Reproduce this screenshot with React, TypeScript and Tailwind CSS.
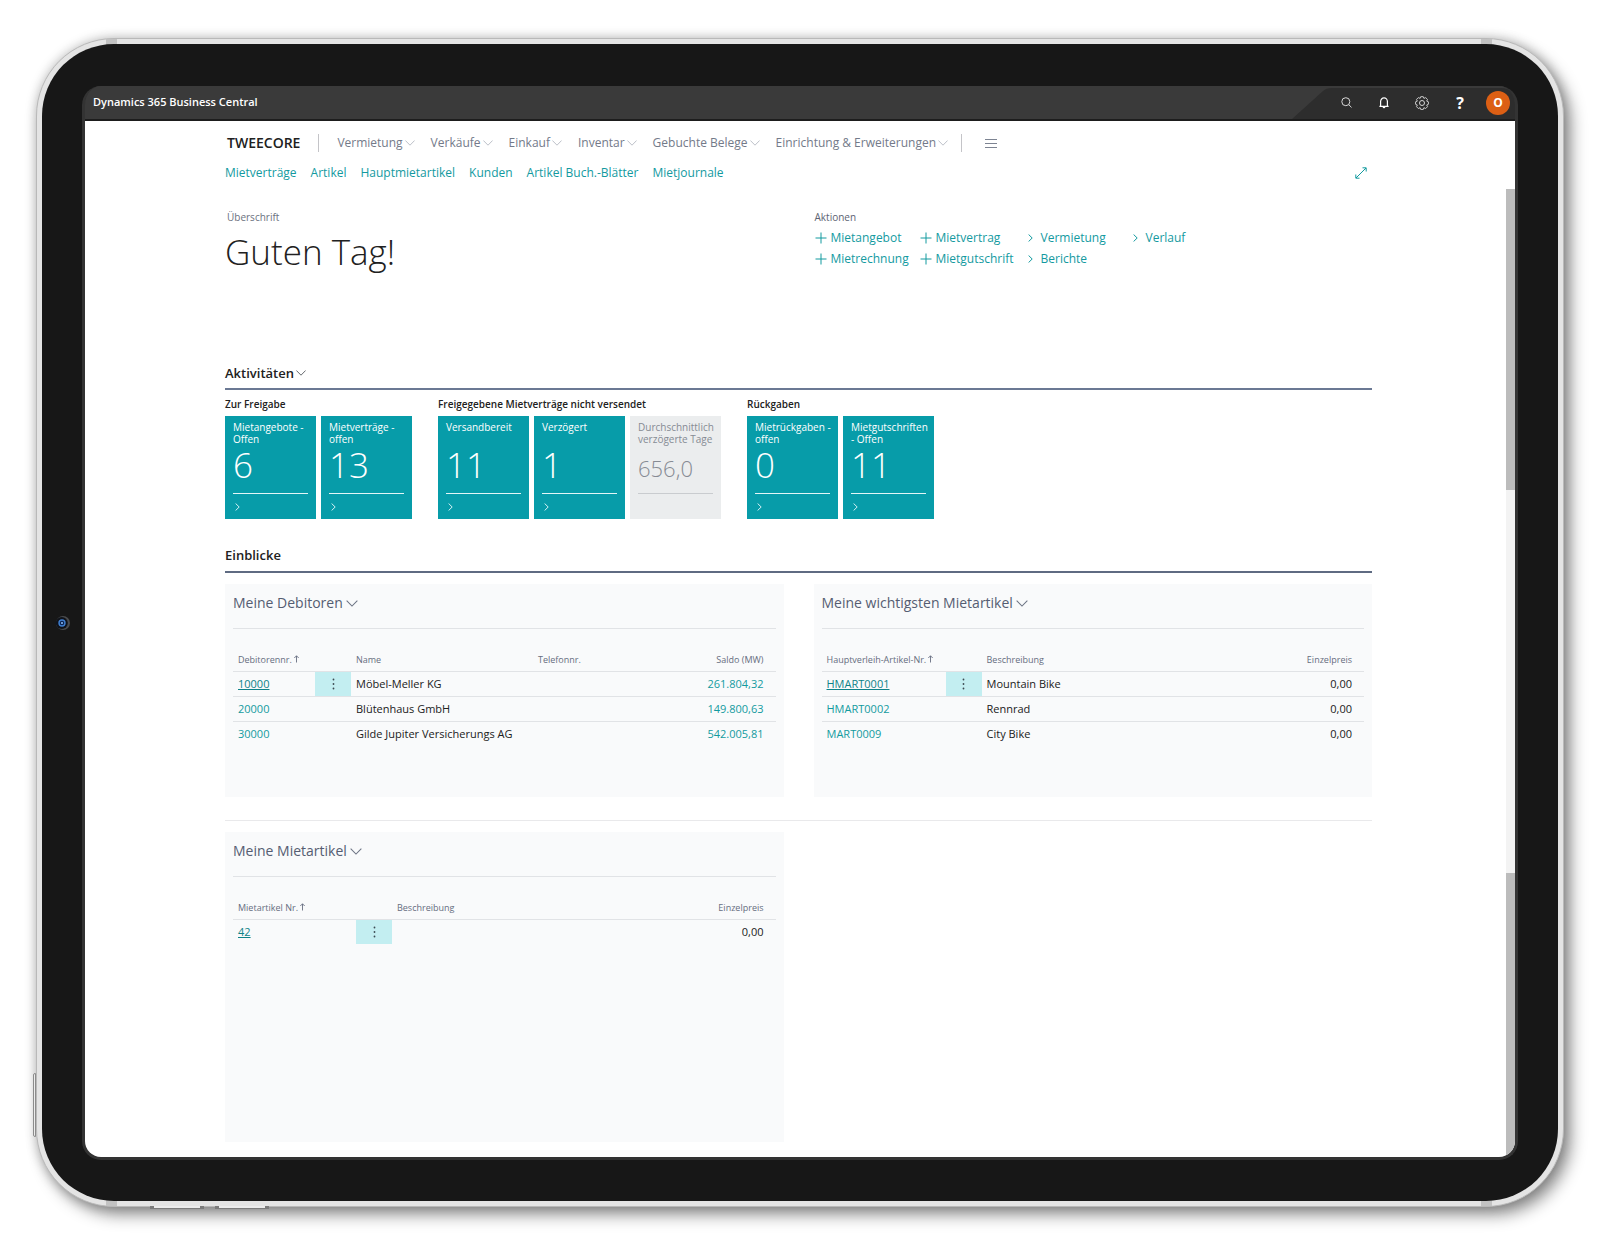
import React, { ReactElement, ReactNode } from 'react';
import c from 'clsx';

type IconProps = { className?: string };

const NAV = [
  'Vermietung',
  'Verkäufe',
  'Einkauf',
  'Inventar',
  'Gebuchte Belege',
  'Einrichtung & Erweiterungen',
];

const SUBNAV = [
  'Mietverträge',
  'Artikel',
  'Hauptmietartikel',
  'Kunden',
  'Artikel Buch.-Blätter',
  'Mietjournale',
];

const ACTIONS = [
  { label: 'Mietangebot', create: true },
  { label: 'Mietvertrag', create: true },
  { label: 'Vermietung' },
  { label: 'Verlauf' },
  { label: 'Mietrechnung', create: true },
  { label: 'Mietgutschrift', create: true },
  { label: 'Berichte' },
];

const TILE_GROUPS = [
  {
    title: 'Zur Freigabe',
    tiles: [
      { label: 'Mietangebote - Offen', value: '6' },
      { label: 'Mietverträge - offen', value: '13' },
    ],
  },
  {
    title: 'Freigegebene Mietverträge nicht versendet',
    tiles: [
      { label: 'Versandbereit', value: '11' },
      { label: 'Verzögert', value: '1' },
      { label: 'Durchschnittlich verzögerte Tage', value: '656,0', muted: true },
    ],
  },
  {
    title: 'Rückgaben',
    tiles: [
      { label: 'Mietrückgaben - offen', value: '0' },
      { label: 'Mietgutschriften - Offen', value: '11' },
    ],
  },
];

export default function App(): ReactElement {
  return (
    <div className="min-h-screen bg-white px-9 pt-[38px] pb-9 font-['Open_Sans','Noto_Sans',sans-serif] text-[#212121]">
      <Device>
        <TopBar />
        <div className="flex flex-grow bg-white">
          <main className="flex-grow min-w-0 pl-[140px] pr-[134px] pt-3 pb-[15px]">
            <Navigation />
            <Headline />
            <Activities />
            <Insights />
          </main>
          <Scrollbar />
        </div>
      </Device>
    </div>
  );
}

function Device(props: { children: ReactNode }): ReactElement {
  return (
    <div className="relative rounded-[78px] border border-[#b9b9b9] bg-[#e4e4e4] p-[5px] shadow-[0_0_12px_rgba(0,0,0,0.22),7px_8px_16px_rgba(0,0,0,0.42)]">
      <span className="absolute -left-1 bottom-[69px] h-16 w-[3px] rounded-l-xs border border-[#8c8c8c] bg-[#ececec]" />
      <span className="absolute left-[113px] -bottom-[3px] h-[3px] w-[54px] border-x-4 border-b border-[#7c7c7c] bg-[#ececec]" />
      <span className="absolute left-[178px] -bottom-[3px] h-[3px] w-[54px] border-x-4 border-b border-[#7c7c7c] bg-[#ececec]" />
      <span className="absolute left-[69px] top-0 h-full w-[11px] bg-[#c2c2c2]" />
      <span className="absolute right-[71px] top-0 h-full w-[11px] bg-[#c2c2c2]" />
      <div className="relative rounded-[72px] bg-[#171717] px-10 pt-[42px] pb-[41px]">
        <svg
          className="absolute left-3 top-1/2 size-4 -translate-y-1/2"
          viewBox="0 0 16 16"
          aria-hidden="true"
        >
          <circle cx="9" cy="8" r="7" fill="#4a4b4d" />
          <circle cx="7.8" cy="8" r="6" fill="#10131a" />
          <circle cx="8" cy="8" r="3" fill="#0c2350" stroke="#3f7fd0" strokeWidth="1.4" />
          <circle cx="8" cy="8" r="1" fill="#8ec2ff" />
        </svg>
        <div className="flex flex-col overflow-hidden rounded-[19px] border-x-[3px] border-b-[3px] border-[#333333] bg-[#333333]">
          {props.children}
        </div>
      </div>
    </div>
  );
}

function TopBar(): ReactElement {
  return (
    <header className="relative flex h-[35px] items-center justify-between border-b-2 border-[#1d1d1d] bg-[#3a3a3a] pl-2 pr-[5px]">
      <svg
        className="absolute right-0 bottom-0 h-[31px] w-[223px]"
        viewBox="0 0 223 31"
        preserveAspectRatio="none"
        aria-hidden="true"
      >
        <path d="M0 31 L31 3 Q34 0 40 0 H209 Q223 0 223 14 V31 Z" fill="#2d2d2d" />
      </svg>
      <span className="pb-[2px] text-[11px] font-semibold leading-4 text-white">
        Dynamics 365 Business Central
      </span>
      <div className="relative flex items-center">
        <TopButton label="Suchen">
          <SearchIcon />
        </TopButton>
        <TopButton label="Benachrichtigungen">
          <BellIcon />
        </TopButton>
        <TopButton label="Einstellungen">
          <GearIcon />
        </TopButton>
        <TopButton label="Hilfe">
          <span className="text-base font-bold leading-4">?</span>
        </TopButton>
        <button className="ml-[7px] flex size-6 items-center justify-center rounded-full bg-[#dc5f14] text-xs font-bold text-white">
          O
        </button>
      </div>
    </header>
  );
}

function TopButton(props: { label: string; children: ReactNode }): ReactElement {
  return (
    <button
      className="flex h-6 w-[38px] items-center justify-center text-white"
      aria-label={props.label}
    >
      {props.children}
    </button>
  );
}

function Navigation(): ReactElement {
  return (
    <nav>
      <div className="flex h-5 items-center">
        <span className="pl-[2px] text-sm font-semibold">TWEECORE</span>
        <span className="mx-[18px] h-[18px] w-px bg-[#c4c4c8]" />
        <div className="flex items-center gap-4">
          {NAV.map((item) => (
            <button
              key={item}
              className="flex items-center gap-[2px] text-xs whitespace-nowrap text-[#737a89]"
            >
              {item}
              <ChevronDown className="h-[6px] w-[10px] text-[#b4b9c2]" />
            </button>
          ))}
        </div>
        <span className="ml-[13px] mr-[23px] h-[18px] w-px bg-[#c4c4c8]" />
        <button aria-label="Weitere Menüpunkte">
          <svg className="h-[9px] w-3 text-[#7d8492]" viewBox="0 0 12 9" aria-hidden="true">
            <path d="M0 .5h12M0 4.5h12M0 8.5h12" stroke="currentColor" strokeWidth="1" />
          </svg>
        </button>
      </div>
      <div className="mt-[10px] flex h-5 items-center text-xs text-[#139a9f]">
        <div className="flex gap-[14px]">
          {SUBNAV.map((item) => (
            <a key={item} href="#" className="whitespace-nowrap">
              {item}
            </a>
          ))}
        </div>
        <button className="ml-auto mr-[5px]" aria-label="Erweitern">
          <svg className="size-3" viewBox="0 0 12 12" fill="none" aria-hidden="true">
            <path
              d="M1 11 11 1M7.5 .8h3.7v3.7M.8 7.5v3.7h3.7"
              stroke="currentColor"
              strokeWidth="1"
            />
          </svg>
        </button>
      </div>
    </nav>
  );
}

function Headline(): ReactElement {
  return (
    <section className="mt-[26px] grid min-h-[154px] grid-cols-2 gap-x-8">
      <div>
        <p className="pl-[2px] text-[10px] leading-4 text-[#6b7180]">Überschrift</p>
        <h1 className="mt-[5px] text-[35px] font-light leading-[44px]">Guten Tag!</h1>
      </div>
      <div>
        <p className="text-[10px] leading-4 text-[#5d6373]">Aktionen</p>
        <div className="mt-[2px] grid grid-cols-[105px_105px_105px_105px]">
          {ACTIONS.map((action) => (
            <a
              key={action.label}
              href="#"
              className="flex h-[21px] items-center gap-1 text-xs whitespace-nowrap text-[#139a9f]"
            >
              {action.create ? (
                <PlusIcon className="size-3" />
              ) : (
                <span className="flex w-3 justify-center">
                  <ChevronRight className="h-2 w-[5px]" />
                </span>
              )}
              {action.label}
            </a>
          ))}
        </div>
      </div>
    </section>
  );
}

function Activities(): ReactElement {
  return (
    <section>
      <h2 className="flex h-[27px] border-b-2 border-[#6b7994] text-[13px] font-semibold leading-5">
        <button className="flex h-5 items-center gap-[2px]">
          Aktivitäten
          <ChevronDown className="h-[6px] w-[10px] text-[#55585e]" />
        </button>
      </h2>
      <div className="mt-[6px] flex gap-[26px]">
        {TILE_GROUPS.map((group) => (
          <div key={group.title}>
            <h3 className="h-5 text-[10px] font-semibold leading-4 whitespace-nowrap">
              {group.title}
            </h3>
            <div className="flex gap-[5px]">
              {group.tiles.map((tile) => (
                <Tile key={tile.label} {...tile} />
              ))}
            </div>
          </div>
        ))}
      </div>
    </section>
  );
}

function Tile(props: { label: string; value: string; muted?: boolean }): ReactElement {
  return (
    <button
      className={c('flex h-[103px] w-[91px] flex-col px-2 pt-[5px] text-left', {
        'bg-[#ebedee] text-[#868b94]': props.muted,
        'bg-[#079ca9] text-white': !props.muted,
      })}
    >
      <span className="-mr-1 h-6 text-[10px] leading-3">{props.label}</span>
      <span
        className={c('h-12 font-light', {
          'text-[22px] leading-[46px]': props.muted,
          'text-[35px] leading-10': !props.muted,
        })}
      >
        {props.value}
      </span>
      <span
        className={c('w-full border-t pt-[9px] pl-[2px]', {
          'border-[#c9cccf]': props.muted,
          'border-[#e3f6f7]': !props.muted,
        })}
      >
        {!props.muted && <ChevronRight className="h-2 w-[5px] text-[#d5f1f3]" />}
      </span>
    </button>
  );
}

function Insights(): ReactElement {
  return (
    <section className="mt-[26px]">
      <h2 className="h-7 border-b-2 border-[#5f6b82] text-[13px] font-semibold leading-5">
        Einblicke
      </h2>
      <div className="mt-[11px] grid grid-cols-2 gap-[30px] border-b border-[#e9e9eb] pb-[23px]">
        <Card title="Meine Debitoren" className="h-[213px]">
          <table className="w-full table-fixed text-[11px]">
            <colgroup>
              <col className="w-[82px]" />
              <col className="w-9" />
              <col className="w-[182px]" />
              <col />
              <col className="w-[90px]" />
            </colgroup>
            <thead>
              <tr>
                <Th colSpan={2} sorted>
                  Debitorennr.
                </Th>
                <Th>Name</Th>
                <Th>Telefonnr.</Th>
                <Th right>Saldo (MW)</Th>
              </tr>
            </thead>
            <tbody>
              <DebtorRow no="10000" name="Möbel-Meller KG" balance="261.804,32" active />
              <DebtorRow no="20000" name="Blütenhaus GmbH" balance="149.800,63" />
              <DebtorRow no="30000" name="Gilde Jupiter Versicherungs AG" balance="542.005,81" />
            </tbody>
          </table>
        </Card>
        <Card title="Meine wichtigsten Mietartikel" className="h-[213px]">
          <table className="w-full table-fixed text-[11px]">
            <colgroup>
              <col className="w-[124px]" />
              <col className="w-9" />
              <col />
              <col className="w-[90px]" />
            </colgroup>
            <thead>
              <tr>
                <Th colSpan={2} sorted>
                  Hauptverleih-Artikel-Nr.
                </Th>
                <Th>Beschreibung</Th>
                <Th right>Einzelpreis</Th>
              </tr>
            </thead>
            <tbody>
              <ItemRow no="HMART0001" name="Mountain Bike" price="0,00" active />
              <ItemRow no="HMART0002" name="Rennrad" price="0,00" />
              <ItemRow no="MART0009" name="City Bike" price="0,00" />
            </tbody>
          </table>
        </Card>
      </div>
      <div className="mt-[11px] grid grid-cols-2 gap-[30px]">
        <Card title="Meine Mietartikel" className="h-[310px]">
          <table className="w-full table-fixed text-[11px]">
            <colgroup>
              <col className="w-[123px]" />
              <col className="w-9" />
              <col />
              <col className="w-[90px]" />
            </colgroup>
            <thead>
              <tr>
                <Th colSpan={2} sorted>
                  Mietartikel Nr.
                </Th>
                <Th>Beschreibung</Th>
                <Th right>Einzelpreis</Th>
              </tr>
            </thead>
            <tbody>
              <ItemRow no="42" name="" price="0,00" active />
            </tbody>
          </table>
        </Card>
      </div>
    </section>
  );
}

function Card(props: {
  title: string;
  className?: string;
  children: ReactNode;
}): ReactElement {
  return (
    <div className={c('bg-[#f9fafb] px-2', props.className)}>
      <h3 className="h-[45px] border-b border-[#e1e3e6] pt-2 text-sm leading-[22px] text-[#555d72]">
        <button className="flex items-center gap-[3px]">
          {props.title}
          <ChevronDown className="h-[7px] w-3 text-[#6d7484]" />
        </button>
      </h3>
      {props.children}
    </div>
  );
}

function Th(props: {
  children: ReactNode;
  colSpan?: number;
  sorted?: boolean;
  right?: boolean;
}): ReactElement {
  return (
    <th
      colSpan={props.colSpan}
      className={c(
        'h-[42px] border-b border-[#e1e3e6] pt-[21px] align-top text-[9px] font-normal leading-[20px] whitespace-nowrap text-[#666d80]',
        props.right ? 'pr-3 text-right' : 'pl-[5px] text-left',
      )}
    >
      {props.children}
      {props.sorted && (
        <svg
          className="ml-[2px] inline h-2 w-[5px] align-baseline"
          viewBox="0 0 5 8"
          fill="none"
          aria-hidden="true"
        >
          <path d="M2.5 7.5V.8M.3 3 2.5.8 4.7 3" stroke="currentColor" strokeWidth=".9" />
        </svg>
      )}
    </th>
  );
}

function Cell(props: { children?: ReactNode; className?: string }): ReactElement {
  return (
    <td className={c('h-[25px] px-[5px] py-0 leading-4 whitespace-nowrap', props.className)}>
      {props.children}
    </td>
  );
}

function LeadCells(props: { no: string; active?: boolean }): ReactElement {
  return (
    <>
      <Cell>
        <a
          href="#"
          className={props.active ? 'text-[#0e8288] underline' : 'text-[#139a9f]'}
        >
          {props.no}
        </a>
      </Cell>
      <td className={c('p-0', { 'bg-[#c3eef1]': props.active })}>
        {props.active && (
          <button className="flex w-full justify-center" aria-label="Weitere Optionen">
            <svg className="h-3 w-[3px]" viewBox="0 0 3 12" fill="#3c4a52" aria-hidden="true">
              <circle cx="1.5" cy="1.5" r=".9" />
              <circle cx="1.5" cy="6" r=".9" />
              <circle cx="1.5" cy="10.5" r=".9" />
            </svg>
          </button>
        )}
      </td>
    </>
  );
}

function DebtorRow(props: {
  no: string;
  name: string;
  balance: string;
  active?: boolean;
}): ReactElement {
  return (
    <tr className="border-b border-[#e1e3e6] last:border-b-0">
      <LeadCells no={props.no} active={props.active} />
      <Cell>{props.name}</Cell>
      <Cell />
      <Cell className="pr-3 text-right">
        <a href="#" className="text-[#139a9f]">
          {props.balance}
        </a>
      </Cell>
    </tr>
  );
}

function ItemRow(props: {
  no: string;
  name: string;
  price: string;
  active?: boolean;
}): ReactElement {
  return (
    <tr className="border-b border-[#e1e3e6] last:border-b-0">
      <LeadCells no={props.no} active={props.active} />
      <Cell>{props.name}</Cell>
      <Cell className="pr-3 text-right">{props.price}</Cell>
    </tr>
  );
}

// two thumbs on one track: page scroll and the list part below it
function Scrollbar(): ReactElement {
  return (
    <div className="flex w-[9px] shrink-0 flex-col pt-[68px]">
      <div className="h-[301px] bg-[#bcbcbc]" />
      <div className="h-[383px] bg-[#f3f3f3]" />
      <div className="flex-grow bg-[#bcbcbc]" />
    </div>
  );
}

function ChevronDown(props: IconProps): ReactElement {
  return (
    <svg className={props.className} viewBox="0 0 10 6" fill="none" aria-hidden="true">
      <path d="M.4.5 5 5.2 9.6.5" stroke="currentColor" strokeWidth=".9" />
    </svg>
  );
}

function ChevronRight(props: IconProps): ReactElement {
  return (
    <svg className={props.className} viewBox="0 0 5 8" fill="none" aria-hidden="true">
      <path d="M.6.5 4.2 4 .6 7.5" stroke="currentColor" strokeWidth="1" />
    </svg>
  );
}

function PlusIcon(props: IconProps): ReactElement {
  return (
    <svg className={props.className} viewBox="0 0 12 12" fill="none" aria-hidden="true">
      <path d="M6 .5v11M.5 6h11" stroke="currentColor" strokeWidth="1" />
    </svg>
  );
}

function SearchIcon(): ReactElement {
  return (
    <svg className="size-[11px]" viewBox="0 0 11 11" fill="none" aria-hidden="true">
      <circle cx="4.8" cy="4.7" r="4" stroke="#d8d8d8" strokeWidth="1" />
      <path d="m7.7 7.6 2.8 2.8" stroke="#d8d8d8" strokeWidth="1" />
    </svg>
  );
}

function BellIcon(): ReactElement {
  return (
    <svg className="h-3 w-[10px]" viewBox="0 0 10 12" fill="none" aria-hidden="true">
      <path
        d="M.4 9.4h9.2M1.6 9.4V4.6a3.4 3.7 0 0 1 6.8 0v4.8"
        stroke="currentColor"
        strokeWidth="1.2"
      />
      <path d="M3.6 9.8a1.4 1.5 0 0 0 2.8 0Z" fill="currentColor" />
    </svg>
  );
}

function GearIcon(): ReactElement {
  return (
    <svg className="size-[14px]" viewBox="0 0 14 14" fill="none" stroke="#d8d8d8" aria-hidden="true">
      <path
        d="M5.7.7h2.6l.6 1.7 1.8-.8 1.8 1.8-.8 1.7 1.7.7v2.5l-1.7.7.8 1.7-1.8 1.8-1.8-.8-.6 1.7H5.7l-.6-1.7-1.8.8-1.8-1.8.8-1.7-1.7-.7V5.8l1.7-.7-.8-1.7 1.8-1.8 1.8.8Z"
        strokeWidth=".9"
        strokeLinejoin="round"
      />
      <circle cx="7" cy="7" r="2.5" strokeWidth="1" />
    </svg>
  );
}
